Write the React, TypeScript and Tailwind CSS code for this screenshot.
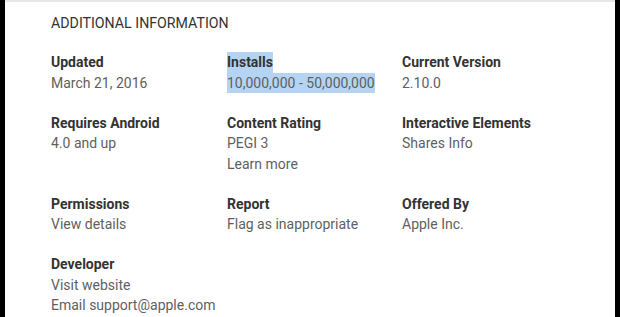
const rows: { label: string; values: string[]; highlight?: boolean }[][] = [
  [
    { label: 'Updated', values: ['March 21, 2016'] },
    { label: 'Installs', values: ['10,000,000 - 50,000,000'], highlight: true },
    { label: 'Current Version', values: ['2.10.0'] },
  ],
  [
    { label: 'Requires Android', values: ['4.0 and up'] },
    { label: 'Content Rating', values: ['PEGI 3', 'Learn more'] },
    { label: 'Interactive Elements', values: ['Shares Info'] },
  ],
  [
    { label: 'Permissions', values: ['View details'] },
    { label: 'Report', values: ['Flag as inappropriate'] },
    { label: 'Offered By', values: ['Apple Inc.'] },
  ],
  [{ label: 'Developer', values: ['Visit website', 'Email support@apple.com'] }],
];

export default function App() {
  return (
    <div className="w-[620px] h-[317px] bg-black px-[5px] overflow-hidden font-['Roboto','Liberation_Sans',sans-serif]">
      <div className="h-full bg-white border-t-2 border-[#e6e6e6] pl-[46px] pt-[11px]">
        <h2 className="text-[14.2px] leading-[20px] text-[#333] uppercase">Additional Information</h2>

        <div className="mt-[19px] grid grid-cols-[176px_175px_1fr] gap-y-[19.5px]">
          {rows.flat().map((item) => (
            <div key={item.label} className="flex flex-col items-start text-[14px] leading-[20.5px]">
              <span className={`font-bold text-[#333] ${item.highlight ? 'bg-[#b5d4f4]' : ''}`}>{item.label}</span>
              {item.values.map((v) => (
                <span key={v} className={`text-[#5f5f5f] ${item.highlight ? 'bg-[#b5d4f4]' : ''}`}>
                  {v}
                </span>
              ))}
            </div>
          ))}
        </div>
      </div>
    </div>
  );
}
